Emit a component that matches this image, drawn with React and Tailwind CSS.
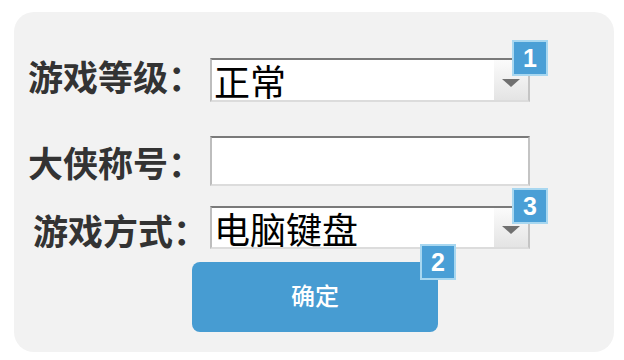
const font = { fontFamily: '"Noto Sans CJK SC", "Noto Sans", sans-serif' };

function Badge({ n, className }) {
  return (
    <div
      className={
        "absolute w-[36px] h-[36px] border-2 border-[#a8d7f0] bg-[#4a9fd6] text-white flex items-center justify-center font-bold text-[25px] leading-none " +
        className
      }
      style={{ fontFamily: '"Liberation Sans", Arial, sans-serif' }}
    >
      {n}
    </div>
  );
}

function FakeSelect({ value, height, badge }) {
  return (
    <div
      className={
        "relative w-[320px] bg-white border-2 border-t-[#7a7a7a] border-l-[#bdbdbd] border-r-[#c4c4c4] border-b-[#dcdcdc] " +
        height
      }
    >
      <div className="h-full flex items-center pl-[2px] text-[36px] leading-none text-black">
        {value}
      </div>
      <div className="absolute right-0 top-0 bottom-0 w-[34px] bg-gradient-to-b from-[#fbfbfb] to-[#e4e4e4] flex items-center justify-center pt-[5px]">
        <div className="w-0 h-0 border-l-[9px] border-r-[9px] border-t-[8px] border-l-transparent border-r-transparent border-t-[#707070]" />
      </div>
      <Badge n={badge} className="left-[300px] top-[-20px]" />
    </div>
  );
}

export default function App() {
  return (
    <div className="w-[624px] h-[360px] bg-white pt-[12px] pl-[14px]" style={font}>
      <div className="w-[600px] h-[340px] rounded-[20px] bg-[#f2f2f2] pl-[14px] pt-[46px]">
        {/* 游戏等级 */}
        <div className="flex items-center">
          <div className="w-[182px] text-[35px] font-bold text-[#333] leading-none -mt-[10px]">
            游戏等级：
          </div>
          <FakeSelect value="正常" height="h-[44px]" badge="1" />
        </div>

        {/* 大侠称号 */}
        <div className="flex items-center mt-[34px]">
          <div className="w-[182px] text-[35px] font-bold text-[#333] leading-none">
            大侠称号：
          </div>
          <input
            className="w-[320px] h-[50px] bg-white border-2 border-t-[#7a7a7a] border-l-[#bdbdbd] border-r-[#c4c4c4] border-b-[#dcdcdc] outline-none"
          />
        </div>

        {/* 游戏方式 */}
        <div className="flex items-center mt-[20px]">
          <div className="w-[182px] pl-[5px] text-[35px] font-bold text-[#333] leading-none mt-[4px]">
            游戏方式：
          </div>
          <FakeSelect value="电脑键盘" height="h-[43px]" badge="3" />
        </div>

        <div className="mt-[13px] pl-[164px]">
          <button className="relative w-[246px] h-[70px] rounded-[8px] bg-[#479cd2] text-white text-[24px] font-medium pb-[4px]">
            确定
            <Badge n="2" className="left-[228px] top-[-18px] w-[35px] h-[35px]" />
          </button>
        </div>
      </div>
    </div>
  );
}
